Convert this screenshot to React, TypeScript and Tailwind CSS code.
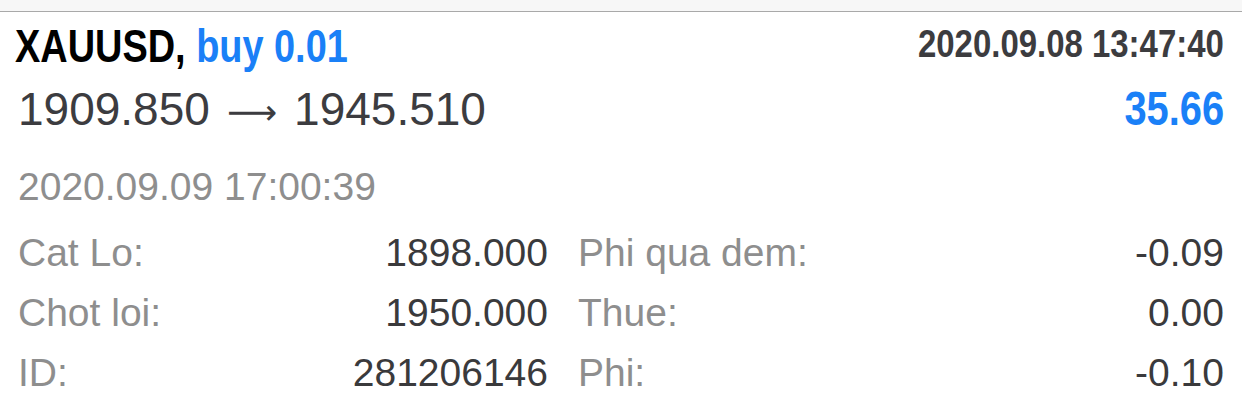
import React from 'react'

const bold = "font-['Liberation_Sans',Arial,sans-serif] font-bold"

function DetailRow({ label, value }: { label: string; value: string }) {
  return (
    <div className="flex items-baseline justify-between h-[60px] leading-[60px]">
      <span className="text-[#8e8e8e]">{label}</span>
      <span className="text-[#3a3a3c]">{value}</span>
    </div>
  )
}

export default function App() {
  return (
    <div className="w-[1242px] h-[407px] bg-white overflow-hidden font-['Liberation_Sans',Arial,sans-serif]">
      {/* верхняя полоса */}
      <div className="h-[12px] bg-[#f7f7f7] border-b border-[#a9a9a9]" />

      <div className="px-[18px]">
        <div className="flex items-start justify-between pt-[6px]">
          <div className={`${bold} text-[46px] leading-[56px] text-black whitespace-nowrap origin-left scale-x-[0.824] -ml-[3px]`}>
            XAUUSD, <span className="text-[#1a80f7]">buy 0.01</span>
          </div>
          <div className={`${bold} text-[38px] leading-[52px] text-[#3c3c3f] whitespace-nowrap origin-right scale-x-[0.867]`}>
            2020.09.08 13:47:40
          </div>
        </div>

        <div className="flex items-baseline justify-between mt-[7px] leading-[56px]">
          <div className="text-[46px] text-[#3c3c40] whitespace-nowrap">
            1909.850<span className="font-['DejaVu_Sans',sans-serif] text-[35px] mx-[17px] relative -top-[1px]">⟶</span>1945.510
          </div>
          <div className={`${bold} text-[48px] text-[#1a80f7] origin-right scale-x-[0.83]`}>35.66</div>
        </div>

        <div className="mt-[22px] text-[39px] leading-[48px] text-[#8e8e8e]">
          2020.09.09 17:00:39
        </div>

        <div className="mt-[12px] grid grid-cols-[530px_1fr] gap-x-[30px] text-[39px]">
          <div>
            <DetailRow label="Cat Lo:" value="1898.000" />
            <DetailRow label="Chot loi:" value="1950.000" />
            <DetailRow label="ID:" value="281206146" />
          </div>
          <div>
            <DetailRow label="Phi qua dem:" value="-0.09" />
            <DetailRow label="Thue:" value="0.00" />
            <DetailRow label="Phi:" value="-0.10" />
          </div>
        </div>
      </div>
    </div>
  )
}
